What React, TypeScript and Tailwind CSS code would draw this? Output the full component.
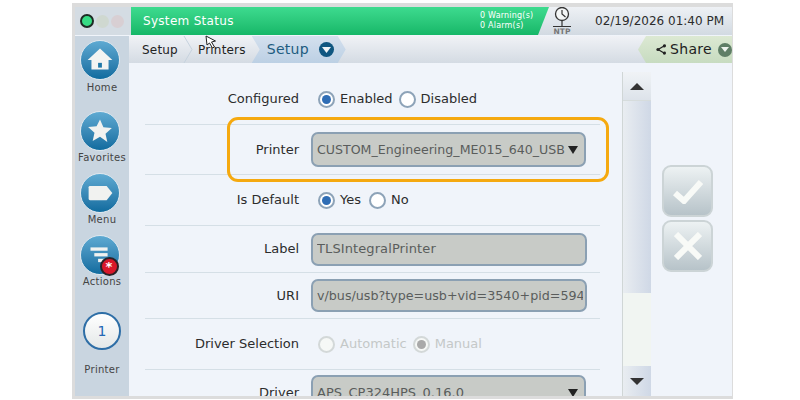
const font = "font-['DejaVu_Sans',sans-serif]";

const Radio = ({ on, disabled }: { on?: boolean; disabled?: boolean }) => (
  <span
    className={`flex h-[17px] w-[17px] items-center justify-center rounded-full border-2 ${
      disabled ? "border-[#d3d8d8] bg-[#f6f8f6]" : "border-[#8da3b8] bg-white"
    }`}
  >
    {on && <span className={`h-[9px] w-[9px] rounded-full ${disabled ? "bg-[#a9a9a9]" : "bg-[#2f6db5]"}`} />}
  </span>
);

const RadioOption = ({ label, on, disabled }: { label: string; on?: boolean; disabled?: boolean }) => (
  <span className="flex items-center gap-[5px]">
    <Radio on={on} disabled={disabled} />
    <span className={disabled ? "text-[#c4c8c8]" : "text-[#2c2c2c]"}>{label}</span>
  </span>
);

const Row = ({ label, h, controls, children }: { label: string; h: string; controls?: string; children: React.ReactNode }) => (
  <div className={`ml-[16px] flex w-[455px] shrink-0 items-center border-b border-[#d5dfe6] ${h}`}>
    <div className="w-[154px] shrink-0 text-right text-[#2c2c2c]">{label}</div>
    <div className={`flex items-center ${controls ?? "ml-[12px]"}`}>{children}</div>
  </div>
);

const Field = ({ value, arrow, textClass }: { value: string; arrow?: boolean; textClass?: string }) => (
  <div
    className={`flex items-center overflow-hidden rounded-[7px] border-2 border-[#8ba0b3] bg-[#c8cbc7] pl-[4px] text-[#5a5d5c] ${
      arrow ? "h-[35px] w-[275px] pr-[6px]" : "h-[33px] w-[276px] pr-[2px]"
    }`}
  >
    <span className={`flex-1 overflow-hidden whitespace-nowrap ${textClass ?? ""}`}>{value}</span>
    {arrow && (
      <svg width="10" height="8" viewBox="0 0 10 8" className="ml-[2px] shrink-0">
        <path d="M0 0h10L5 8z" fill="#222" />
      </svg>
    )}
  </div>
);

const SideButton = ({ label, h, labelTop, children }: { label: string; h: string; labelTop?: string; children: React.ReactNode }) => (
  <div className={`flex w-full flex-col items-center ${h}`}>
    <div className="relative mr-[5px] h-[40px] w-[40px] shrink-0 rounded-full border border-[#dfe8ef] bg-gradient-to-b from-[#5eaad2] to-[#0f6c9f]">
      {children}
    </div>
    <span className={`text-[10px] leading-[14px] tracking-[0.3px] text-[#444] ${labelTop ?? ""}`}>{label}</span>
  </div>
);

const HomeIcon = () => (
  <svg viewBox="0 0 40 40" className="h-full w-full">
    <path d="M20 8L7 20h4v10h18V20h4z" fill="#f3f4f2" />
    <rect x="18" y="23" width="4" height="5" fill="#1f78a8" />
  </svg>
);

const StarIcon = () => (
  <svg viewBox="0 0 40 40" className="h-full w-full">
    <path d="M20 8l3.600 8 8.900.9-6.700 5.900 1.900 8.700L20 26.100l-7.700 4.400 1.900-8.700-6.700-5.900 8.900-.9z" fill="#f1f2f0" />
  </svg>
);

const TagIcon = () => (
  <svg viewBox="0 0 40 40" className="h-full w-full">
    <path d="M8 14a1.500 1.500 0 0 1 1.500-1.500H27l6 7.500-6 7.500H9.500A1.500 1.500 0 0 1 8 26z" fill="#f1f2f0" />
  </svg>
);

const ActionsIcon = () => (
  <svg viewBox="0 0 40 40" className="h-full w-full">
    <rect x="10" y="12" width="18" height="3.500" fill="#f1f2f0" />
    <rect x="14" y="18" width="14" height="3.500" fill="#f1f2f0" />
    <rect x="18" y="24" width="10" height="3.500" fill="#f1f2f0" />
  </svg>
);

export default function App() {
  return (
    <div className={`h-[400px] w-[800px] overflow-hidden bg-white pl-[72px] pt-[3px] text-[13px] ${font}`}>
      <div className="relative flex h-[396px] w-[661px] flex-col border-[3px] border-r border-[#dcdcdc] border-t-[4px] bg-[#f0f4fa]">
        {/* status bar */}
        <div className="flex h-[28px] shrink-0 bg-gradient-to-b from-[#eef1f5] to-[#d2dae2]">
          <div className="flex w-[56px] items-center gap-[2px] bg-[#d4dce3] pl-[5px]">
            <span className="h-[14px] w-[14px] rounded-full border-2 border-[#1d2b24] bg-[#36dc84]" />
            <span className="h-[13px] w-[13px] rounded-full bg-[#cfd8d0]" />
            <span className="h-[13px] w-[13px] rounded-full bg-[#d8cfd3]" />
          </div>
          <div className="flex w-[418px] items-center bg-gradient-to-b from-[#3ddb8f] to-[#15b768] pl-[12px] pr-[14px] [clip-path:polygon(0_0,100%_0,calc(100%-11px)_100%,0_100%)]">
            <span className="flex-1 text-[12px] tracking-[0.3px] text-white">System Status</span>
            <span className="w-[55px] text-[8px] leading-[10px] tracking-[0.2px] text-white">
              0 Warning(s)
              <br />0 Alarm(s)
            </span>
          </div>
          <svg width="22" height="28" viewBox="0 0 22 28" className="ml-[2px] shrink-0">
            <circle cx="11" cy="7" r="6.500" fill="#f4f6f6" stroke="#333" strokeWidth="1.300" />
            <path d="M11 3v4l3.500 3" fill="none" stroke="#333" strokeWidth="1.200" />
            <path d="M11 14v5M2 19.500h18" stroke="#333" strokeWidth="1.200" />
            <text x="11" y="27" textAnchor="middle" fontSize="7.500" fontWeight="700" fill="#777">NTP</text>
          </svg>
          <span className="ml-auto mr-[8px] self-center text-[12px] text-[#2c2c2c]">02/19/2026 01:40 PM</span>
        </div>
        {/* breadcrumb row */}
        <div className="ml-[54px] mt-[1px] flex h-[27px] shrink-0 items-center bg-gradient-to-b from-[#f0f2f6] to-[#d4dbe3] text-[12px] text-[#222]">
          <span className="ml-[13px] tracking-[0.2px]">Setup</span>
          <svg width="10" height="27" viewBox="0 0 10 27" className="ml-[5px]">
            <path d="M1 0l8 13.500L1 27" fill="none" stroke="#c6d2de" />
          </svg>
          <span className="ml-[5px] tracking-[0.2px]">Printers</span>
          <div className="ml-[6px] flex h-[27px] w-[94px] items-center bg-gradient-to-b from-[#d4e0ee] to-[#bcd0e4] pl-[15px] text-[14px] tracking-[0.3px] text-[#1d5c80] [clip-path:polygon(0_0,calc(100%-8px)_0,100%_50%,calc(100%-8px)_100%,0_100%,8px_50%)]">
            Setup
            <span className="ml-[10px] flex h-[15px] w-[15px] items-center justify-center rounded-full bg-[#0f5680]">
              <svg width="9" height="6" viewBox="0 0 9 6"><path d="M0 0h9L4.500 6z" fill="#eef3f6" /></svg>
            </span>
          </div>
          <div className="ml-auto flex h-[27px] w-[94px] items-center bg-gradient-to-b from-[#dce9d3] to-[#c7dbc0] pl-[18px] text-[14px] tracking-[0.3px] text-[#222] [clip-path:polygon(8px_0,100%_0,100%_100%,8px_100%,0_50%)]">
            <svg width="12" height="13" viewBox="0 0 12 13">
              <path d="M10 2L2.500 6.500 10 11" fill="none" stroke="#222" strokeWidth="1.500" />
              <circle cx="10" cy="2.200" r="1.900" fill="#222" />
              <circle cx="2.300" cy="6.500" r="1.900" fill="#222" />
              <circle cx="10" cy="10.800" r="1.900" fill="#222" />
            </svg>
            <span className="ml-[4px]">Share</span>
            <span className="ml-[6px] flex h-[14px] w-[14px] shrink-0 items-center justify-center rounded-full bg-[#5f7e66]">
              <svg width="8" height="5" viewBox="0 0 8 5"><path d="M0 0h8L4 5z" fill="#eef3ee" /></svg>
            </span>
          </div>
        </div>
        {/* body */}
        <div className="flex min-h-0 flex-1">
          <div className="-mt-[27px] flex w-[54px] shrink-0 flex-col items-center bg-[#c9d5e0] pt-[4px]">
            <SideButton label="Home" h="h-[71px]" labelTop="mt-[1px]"><HomeIcon /></SideButton>
            <SideButton label="Favorites" h="h-[62px]"><StarIcon /></SideButton>
            <SideButton label="Menu" h="h-[62px]"><TagIcon /></SideButton>
            <SideButton label="Actions" h="h-[62px]">
              <ActionsIcon />
              <span className="absolute -bottom-[2px] right-0 flex h-[19px] w-[19px] items-center justify-center rounded-full border-2 border-[#2a2226] bg-[#d8182a] text-[13px] font-bold leading-none text-white">*</span>
            </SideButton>
            <div className="mt-[15px] flex h-[38px] w-[38px] items-center justify-center rounded-full border-2 border-[#2e6ea6] bg-gradient-to-b from-white to-[#e4e8e8] text-[14px] text-[#2468b4]">1</div>
            <span className="mt-[12px] text-[10px] tracking-[0.3px] text-[#444]">Printer</span>
          </div>
          <div className="relative flex min-w-0 flex-1">
            {/* form */}
            <div className="flex w-[493px] shrink-0 flex-col overflow-hidden pt-[11px]">
              <Row label="Configured" h="h-[51px]" controls="ml-[19px] gap-[6px]">
                <RadioOption label="Enabled" on />
                <RadioOption label="Disabled" />
              </Row>
              <Row label="Printer" h="h-[50px]">
                <Field value="CUSTOM_Engineering_ME015_640_USB" arrow textClass="pt-[1px] text-[12.600px]" />
              </Row>
              <Row label="Is Default" h="h-[51px]" controls="ml-[19px] gap-[8px]">
                <RadioOption label="Yes" on />
                <RadioOption label="No" />
              </Row>
              <Row label="Label" h="h-[47px]">
                <Field value="TLSIntegralPrinter" textClass="tracking-[0.1px]" />
              </Row>
              <Row label="URI" h="h-[46px]">
                <Field value="v/bus/usb?type=usb+vid=3540+pid=594" textClass="text-[12.700px]" />
              </Row>
              <Row label="Driver Selection" h="h-[51px]" controls="ml-[19px] gap-[6px]">
                <RadioOption label="Automatic" disabled />
                <RadioOption label="Manual" on disabled />
              </Row>
              <Row label="Driver" h="h-[46px]">
                <Field value="APS_CP324HPS_0.16.0" arrow />
              </Row>
            </div>
            {/* scrollbar */}
            <div className="mt-[9px] flex w-[29px] shrink-0 flex-col border-l border-[#d0d6d6]">
              <div className="flex h-[29px] items-center justify-center border-b border-[#d6dcdc] bg-gradient-to-b from-[#f0f3f6] to-[#dde3ea]">
                <svg width="14" height="7" viewBox="0 0 14 7"><path d="M0 7h14L7 0z" fill="#333" /></svg>
              </div>
              <div className="h-[192px] bg-gradient-to-r from-[#e9edf1] to-[#cfd8e6]" />
              <div className="flex-1 bg-[#f1f5f2]" />
              <div className="flex h-[30px] items-center justify-center bg-gradient-to-r from-[#e9edf1] to-[#cfd8e6]">
                <svg width="14" height="7" viewBox="0 0 14 7"><path d="M0 0h14L7 7z" fill="#333" /></svg>
              </div>
            </div>
            {/* action buttons */}
            <div className="ml-[11px] flex flex-col gap-[3px] pt-[102px]">
              <button className="flex h-[52px] w-[51px] items-center justify-center rounded-[9px] border-2 border-[#ccd4d6] bg-gradient-to-b from-[#edf2f3] to-[#b7c3c9]">
                <svg width="30" height="26" viewBox="0 0 30 26"><path d="M2 15l9 8L28 4" fill="none" stroke="#f8faf7" strokeWidth="6" /></svg>
              </button>
              <button className="flex h-[52px] w-[51px] items-center justify-center rounded-[9px] border-2 border-[#ccd4d6] bg-gradient-to-b from-[#edf2f3] to-[#b7c3c9]">
                <svg width="28" height="28" viewBox="0 0 28 28"><path d="M2 2l24 24M26 2L2 26" fill="none" stroke="#f8faf7" strokeWidth="6" /></svg>
              </button>
            </div>
            {/* printer highlight */}
            <div className="pointer-events-none absolute left-[98px] top-[54px] h-[65px] w-[382px] rounded-[11px] border-[3px] border-[#f5a90f]" />
          </div>
        </div>
        {/* mouse pointer caught in the screenshot */}
        <svg width="14" height="14" viewBox="0 0 14 14" className="pointer-events-none absolute left-[130px] top-[28px]">
          <path d="M1 1l1 9 2.500-2 3 5 2-1-3-5 4-1z" fill="#fff" stroke="#222" />
        </svg>
      </div>
    </div>
  );
}
